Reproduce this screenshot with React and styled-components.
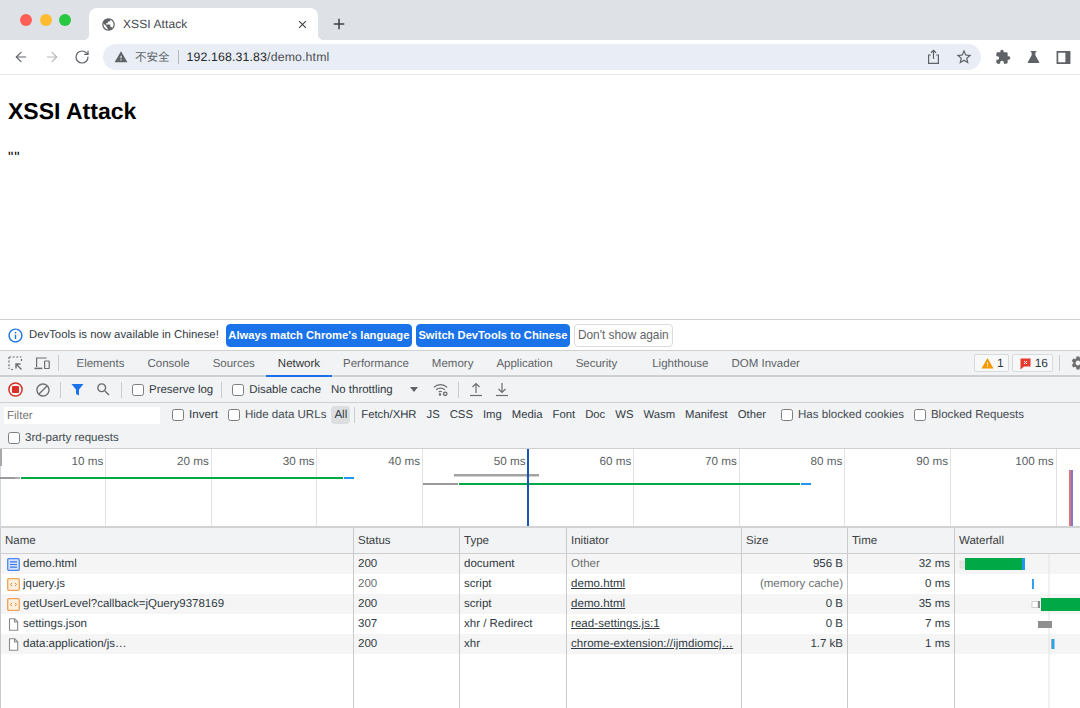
import React from "react";
import styled, { createGlobalStyle } from "styled-components";
import {
  MdPublic,
  MdClose,
  MdAdd,
  MdWarning,
  MdExtension,
  MdStarBorder,
  MdInfoOutline,
  MdSettings,
  MdBlock,
  MdSearch,
} from "react-icons/md";
import { ArrowLeft, ArrowRight, RotateCw } from "lucide-react";

const UI_FONT = `"Liberation Sans", Arial, sans-serif`;

const GlobalStyle = createGlobalStyle`
  html, body {
    margin: 0;
    padding: 0;
    background: #fff;
  }
  body {
    font-family: ${UI_FONT};
    text-rendering: geometricPrecision;
    overflow: hidden;
  }
  * {
    box-sizing: border-box;
  }
`;

const Window = styled.div`
  width: 1080px;
  height: 708px;
  display: flex;
  flex-direction: column;
  overflow: hidden;
  background: #fff;
`;

/* browser chrome */
const TabStrip = styled.div`
  height: 40px;
  flex: none;
  display: flex;
  align-items: flex-end;
  background: #dee1e6;
`;

const TrafficLights = styled.div`
  width: 89px;
  align-self: flex-start;
  display: flex;
  gap: 7.5px;
  padding: 14px 0 0 20px;
`;

const Light = styled.span`
  width: 12px;
  height: 12px;
  border-radius: 50%;
  background: ${({ $color }) => $color};
`;

const BrowserTab = styled.div`
  position: relative;
  width: 229px;
  height: 32px;
  display: flex;
  align-items: center;
  padding: 0 9px 0 12px;
  background: #fff;
  border-radius: 8px 8px 0 0;
  color: #45484d;
  font-size: 12px;
  letter-spacing: 0.1px;
  &::before,
  &::after {
    content: "";
    position: absolute;
    bottom: 0;
    width: 6px;
    height: 6px;
  }
  &::before {
    left: -6px;
    background: radial-gradient(circle at 0 0, transparent 6px, #fff 6.5px);
  }
  &::after {
    right: -6px;
    background: radial-gradient(circle at 100% 0, transparent 6px, #fff 6.5px);
  }
`;

const TabTitle = styled.span`
  flex: 1;
  margin-left: 7px;
`;

const NewTab = styled.div`
  margin: 0 0 7px 12px;
  display: flex;
  color: #3c4043;
`;

const Toolbar = styled.div`
  height: 35px;
  flex: none;
  display: flex;
  align-items: flex-start;
  padding-top: 4px;
  background: #fff;
  border-bottom: 1px solid #e6e6e6;
`;

const NavIcons = styled.div`
  width: 103px;
  height: 26px;
  display: flex;
  align-items: center;
  gap: 14.5px;
  padding-left: 13px;
`;

const NavIcon = styled.span`
  display: flex;
  color: ${({ $muted }) => ($muted ? "#b4b7ba" : "#5f6368")};
`;

const Omnibox = styled.div`
  width: 878px;
  height: 26px;
  display: flex;
  align-items: center;
  padding: 0 8px 0 11px;
  background: #e9eef6;
  border-radius: 13px;
`;

const NotSecure = styled.span`
  margin-left: 7px;
  padding-right: 8px;
  border-right: 1px solid #b5b8bd;
  color: #5f6368;
  font-family: "Noto Sans CJK SC", ${UI_FONT};
  font-size: 11.5px;
  line-height: 14px;
`;

const Url = styled.span`
  flex: 1;
  margin-left: 8px;
  color: #26282b;
  font-size: 12.3px;
  letter-spacing: 0.15px;
  & > em {
    font-style: normal;
    color: #4a4d51;
  }
`;

const OmniActions = styled.div`
  display: flex;
  align-items: center;
  gap: 14px;
  color: #5f6368;
`;

const ExtensionIcons = styled.div`
  height: 26px;
  display: flex;
  align-items: center;
  gap: 15px;
  padding-left: 14px;
  color: #5f6368;
`;

/* inspected page */
const Page = styled.div`
  height: 244px;
  flex: none;
  padding: 22px 8px 0;
  color: #000;
`;

const Heading = styled.h1`
  margin: 0;
  font-size: 23px;
  line-height: 28px;
  font-weight: 700;
`;

const Output = styled.p`
  margin: 25px 0 0;
  font-size: 15px;
  line-height: 16px;
  letter-spacing: 1px;
`;

/* devtools */
const InfoBar = styled.div`
  height: 32px;
  flex: none;
  display: flex;
  align-items: center;
  padding-left: 7px;
  background: #fff;
  border-top: 1px solid #d0d0d0;
  border-bottom: 1px solid #d0d0d0;
  color: #303942;
  font-size: 11.35px;
`;

const InfoText = styled.span`
  margin: 0 7px 0 5px;
`;

const InfoButton = styled.button`
  height: 23px;
  margin-right: 4px;
  padding: 0 ${({ $plain }) => ($plain ? 3 : 1.5)}px;
  border-radius: 4px;
  font-family: ${UI_FONT};
  font-size: ${({ $plain }) => ($plain ? 11.9 : 11.2)}px;
  font-weight: ${({ $plain }) => ($plain ? 400 : 700)};
  color: ${({ $plain }) => ($plain ? "#5f6368" : "#fff")};
  background: ${({ $plain }) => ($plain ? "#fff" : "#1a73e8")};
  border: 1px solid ${({ $plain }) => ($plain ? "#dadce0" : "#1a73e8")};
  white-space: nowrap;
`;

const PanelTabs = styled.div`
  height: 26px;
  flex: none;
  display: flex;
  align-items: stretch;
  background: #f1f3f4;
  border-bottom: 2px solid #cdcfd1;
  color: #5f6368;
  font-size: 11.5px;
`;

const IconCell = styled.span`
  display: flex;
  align-items: center;
  margin: ${({ $margin }) => $margin || "0"};
  color: ${({ $color }) => $color || "#6e6e6e"};
`;

const Divider = styled.span`
  flex: none;
  align-self: center;
  width: 1px;
  height: 16px;
  margin: ${({ $margin }) => $margin || "0"};
  background: #ccc;
`;

const PanelTab = styled.span`
  display: flex;
  align-items: center;
  padding: 1px 11.5px 0;
  margin: ${({ $margin }) => $margin || "0"};
  color: ${({ $active }) => ($active ? "#333" : "#5f6368")};
  box-shadow: ${({ $active }) => ($active ? "0 2px 0 #1a73e8" : "none")};
`;

const Badges = styled.div`
  margin-left: auto;
  display: flex;
  align-items: center;
  gap: 3px;
`;

const Badge = styled.span`
  height: 18px;
  display: flex;
  align-items: center;
  gap: 3px;
  padding: 0 4px 0 6px;
  background: #f7f8f8;
  border: 1px solid #d8dadc;
  border-radius: 2px;
  color: #303942;
  font-size: 12px;
`;

const NetToolbar = styled.div`
  height: 26px;
  flex: none;
  display: flex;
  align-items: center;
  background: #f1f3f4;
  border-bottom: 1px solid #cdcfd1;
  color: #303942;
  font-size: 11.45px;
`;

const Check = styled.input.attrs({ type: "checkbox", readOnly: true })`
  appearance: none;
  flex: none;
  width: 12px;
  height: 12px;
  margin: 0 5px 0 0;
  background: #fff;
  border: 1px solid #7d7d7d;
  border-radius: 2.5px;
`;

const CheckLabel = styled.label`
  display: flex;
  align-items: center;
  margin: ${({ $margin }) => $margin || "0"};
  color: ${({ $dim }) => ($dim ? "#444a50" : "#303942")};
  white-space: nowrap;
`;

const Throttle = styled.span`
  margin-left: 10px;
  width: 87px;
  display: flex;
  align-items: center;
  justify-content: space-between;
  &::after {
    content: "";
    border-left: 4px solid transparent;
    border-right: 4px solid transparent;
    border-top: 5px solid #5f6368;
  }
`;

const FilterPanel = styled.div`
  height: 46px;
  flex: none;
  padding: 2px 0 0 4px;
  background: #f1f3f4;
  border-bottom: 1px solid #cdcfd1;
  color: #303942;
  font-size: 11.55px;
`;

const FilterRow = styled.div`
  height: 20px;
  display: flex;
  align-items: center;
`;

const FilterInput = styled.span`
  flex: none;
  width: 156px;
  height: 17px;
  margin-top: 1px;
  display: flex;
  align-items: center;
  padding-left: 3px;
  background: #fff;
  color: #777;
`;

const Chip = styled.span`
  flex: none;
  font-size: 11.3px;
  margin-right: ${({ $gap }) => ($gap === undefined ? 10 : $gap)}px;
`;

const ChipAll = styled.span`
  flex: none;
  height: 18px;
  margin-left: 5px;
  padding: 0 3px;
  display: flex;
  align-items: center;
  background: #dcdee0;
  border-radius: 4px;
`;

const SecondRow = styled(FilterRow)`
  margin-top: 3px;
  padding-left: 4px;
`;

const Overview = styled.div`
  position: relative;
  height: 79px;
  flex: none;
  display: grid;
  grid-template-columns: repeat(10, 105.6px) 1fr;
  padding-left: 0.7px;
  background: #fff;
  border-bottom: 2px solid #d0d2d4;
  box-shadow: inset 1px 0 #d0d8e4;
`;

const Tick = styled.div`
  padding: 6px 2px 0 0;
  text-align: right;
  color: #5b5f63;
  font-size: 11.7px;
  line-height: 14px;
  border-right: 1px solid ${({ $hidden }) => ($hidden ? "transparent" : "#e2e2e2")};
`;

const OverviewMarks = styled.svg`
  position: absolute;
  left: 0;
  top: 0;
  width: 1080px;
  height: 77px;
`;

const TableWrap = styled.div`
  flex: 1;
  min-height: 0;
  overflow: hidden;
`;

const Table = styled.table`
  width: 1080px;
  height: 100%;
  table-layout: fixed;
  border-collapse: separate;
  border-spacing: 0;
  color: #303942;
  font-size: 11.5px;
`;

const Th = styled.th`
  height: 26px;
  padding: 0 4px;
  text-align: left;
  font-weight: 400;
  color: #3c4043;
  background: #f1f3f4;
  border-bottom: 1px solid #cdcfd1;
  border-right: 1px solid #c8cacc;
  &:first-child {
    border-left: 1px solid #c8cacc;
  }
  &:last-child {
    border-right: none;
  }
`;

const Tr = styled.tr`
  background: ${({ $striped }) => ($striped ? "#f5f5f5" : "#fff")};
`;

const Td = styled.td`
  height: 20px;
  padding: 0 4px;
  white-space: nowrap;
  overflow: hidden;
  text-overflow: ellipsis;
  text-align: ${({ $right }) => ($right ? "right" : "left")};
  color: ${({ $dim }) => ($dim ? "#6c6f73" : "#303942")};
  border-right: 1px solid #c8cacc;
  &:first-child {
    border-left: 1px solid #c8cacc;
  }
  &:last-child {
    border-right: none;
    padding: 0;
  }
`;

const NameCell = styled.span`
  display: flex;
  align-items: center;
  gap: 3px;
  padding-left: 2px;
`;

const InitiatorLink = styled.span`
  text-decoration: underline;
  color: #303942;
  letter-spacing: 0.06px;
`;

const FillerCell = styled.td`
  padding: 0;
  border-right: 1px solid #c8cacc;
  &:first-child {
    border-left: 1px solid #c8cacc;
  }
  &:last-child {
    border-right: none;
  }
`;

const WaterfallSvg = styled.svg`
  display: block;
  width: 125px;
  height: ${({ $h }) => $h || 20}px;
`;

const FlaskIcon = () => (
  <svg width="15" height="16" viewBox="0 0 16 16" fill="currentColor">
    <path d="M5 1.5h6v1.3H10v3.4l4 7c.4.8-.1 1.3-.9 1.3H2.900c-.8 0-1.300-.5-.9-1.300l4-7V2.800H5z" />
  </svg>
);

const SidePanelIcon = () => (
  <svg width="15" height="15" viewBox="0 0 16 16">
    <path d="M1.500 2h13v12h-13z" fill="none" stroke="currentColor" strokeWidth="1.800" />
    <path d="M10 2h4.500v12H10z" fill="currentColor" />
  </svg>
);

const ShareIcon = () => (
  <svg width="15" height="16" viewBox="0 0 15 16" fill="none" stroke="currentColor" strokeWidth="1.200">
    <path d="M4.800 6H2.600v8.400h9.800V6h-2.200" />
    <path d="M7.500 10V1.600M5 3.800l2.500-2.400L10 3.800" />
  </svg>
);

const InspectIcon = () => (
  <svg width="15" height="15" viewBox="0 0 15 15" fill="none" stroke="#6e6e6e" strokeWidth="1.200">
    <path d="M1 1h12.500M1 1v12" strokeDasharray="2 1.600" />
    <path d="M13.500 3v3M3 13.500h3" strokeDasharray="2 1.600" />
    <path d="M13.500 13.500 8 8M8 12.500V8h4.500" strokeWidth="1.400" />
  </svg>
);

const DeviceIcon = () => (
  <svg width="16" height="15" viewBox="0 0 16 15" fill="none" stroke="#6e6e6e" strokeWidth="1.200">
    <path d="M2.600 11V2h10" />
    <path d="M.4 12.400h8" strokeWidth="1.500" />
    <rect x="10.600" y="5" width="4.600" height="7.500" rx=".6" />
  </svg>
);

const RecordIcon = () => (
  <svg width="15" height="15" viewBox="0 0 15 15">
    <circle cx="7.500" cy="7.500" r="6.600" fill="none" stroke="#d93025" strokeWidth="1.500" />
    <rect x="4" y="4" width="7" height="7" rx="1" fill="#d93025" />
  </svg>
);

const FunnelIcon = () => (
  <svg width="13" height="13" viewBox="0 0 13 13">
    <path d="M.5 1h12L8 6.500V12.500L5 11V6.500z" fill="#1a73e8" />
  </svg>
);

const WifiGearIcon = () => (
  <svg width="16" height="14" viewBox="0 0 16 14" fill="none" stroke="#6e6e6e" strokeWidth="1.200">
    <path d="M.8 4.400C4.500.8 10.500.8 14.200 4.400M3.200 6.800c2.400-2.200 6.200-2.200 8.600 0M5.600 9c1-.8 2.400-.8 3.200-.3" />
    <circle cx="7" cy="11.500" r=".7" fill="#6e6e6e" />
    <circle cx="12.200" cy="10.800" r="1.700" strokeWidth="1.400" />
  </svg>
);

const TransferIcon = ({ down }) => (
  <svg width="14" height="15" viewBox="0 0 14 15" fill="none" stroke="#6e6e6e" strokeWidth="1.200">
    <path d="M1 13.500h12" />
    {down ? <path d="M7 1v9.500M3.500 7 7 10.500 10.500 7" /> : <path d="M7 11V1.500M3.500 5 7 1.500 10.500 5" />}
  </svg>
);

const IssueFlagIcon = () => (
  <svg width="13" height="13" viewBox="0 0 13 13">
    <path d="M1.500 1.500h10v8H5L1.500 12.500z" fill="#e8392e" />
    <path d="M5 4l3 3M8 4 5 7" stroke="#fff" strokeWidth="1" />
  </svg>
);

const FileDoc = () => (
  <svg width="13" height="13" viewBox="0 0 13 13">
    <rect x=".7" y=".7" width="11.600" height="11.600" rx="1.200" fill="#d5e3fb" stroke="#4d86ee" strokeWidth="1.300" />
    <path d="M3 3.800h7M3 6.500h7M3 9.200h7" stroke="#3a76e6" strokeWidth="1.200" />
  </svg>
);

const FileScript = () => (
  <svg width="13" height="13" viewBox="0 0 13 13" fill="none">
    <rect x=".7" y=".7" width="11.600" height="11.600" rx="1.200" fill="#fdf0e0" stroke="#eda254" strokeWidth="1.300" />
    <path d="M5 4.900 3.500 6.500 5 8.100M8 4.900l1.500 1.600L8 8.100" stroke="#de8a35" strokeWidth="1" />
  </svg>
);

const FilePlain = () => (
  <svg width="13" height="13" viewBox="0 0 13 13" fill="#fff" stroke="#8a8a8a" strokeWidth="1.100">
    <path d="M2.500.8h5.200l3 3v8.400h-8.200z" />
    <path d="M7.500.8v3.200h3.200" fill="none" />
  </svg>
);

const GRID_X = 94;

// the x positions are page pixels minus the column start (955)
const Bars = ({ children, h }) => (
  <WaterfallSvg $h={h} viewBox={`0 0 125 ${h || 20}`} preserveAspectRatio="none">
    <line x1={GRID_X} x2={GRID_X} y1="0" y2={h || 20} stroke="#e3e3e3" />
    {children}
  </WaterfallSvg>
);

const ticks = ["10 ms", "20 ms", "30 ms", "40 ms", "50 ms", "60 ms", "70 ms", "80 ms", "90 ms", "100 ms", ""];

const rows = [
  {
    name: "demo.html",
    icon: <FileDoc />,
    status: "200",
    type: "document",
    initiator: "Other",
    size: "956 B",
    time: "32 ms",
    bars: (
      <>
        <rect x="5" y="7" width="5" height="7" fill="#e6e6e6" stroke="#d0d0d0" strokeWidth=".5" />
        <rect x="10" y="4" width="57" height="12" fill="#00a846" />
        <rect x="67" y="4" width="3" height="12" fill="#2196f3" />
      </>
    ),
  },
  {
    name: "jquery.js",
    icon: <FileScript />,
    status: "200",
    statusDim: true,
    type: "script",
    initiator: "demo.html",
    link: true,
    size: "(memory cache)",
    sizeDim: true,
    time: "0 ms",
    bars: <rect x="77" y="5" width="2" height="10" fill="#2aa3f0" />,
  },
  {
    name: "getUserLevel?callback=jQuery9378169",
    icon: <FileScript />,
    status: "200",
    type: "script",
    initiator: "demo.html",
    link: true,
    size: "0 B",
    time: "35 ms",
    bars: (
      <>
        <rect x="77" y="7.500" width="6" height="6" fill="#fff" stroke="#cfcfcf" />
        <rect x="83" y="7" width="2" height="7" fill="#8a8a8a" />
        <rect x="86" y="4" width="39" height="13" fill="#00a846" />
      </>
    ),
  },
  {
    name: "settings.json",
    icon: <FilePlain />,
    status: "307",
    type: "xhr / Redirect",
    initiator: "read-settings.js:1",
    link: true,
    size: "0 B",
    time: "7 ms",
    bars: <rect x="83" y="7" width="14" height="7" fill="#8f8f8f" />,
  },
  {
    name: "data:application/js…",
    icon: <FilePlain />,
    status: "200",
    type: "xhr",
    initiator: "chrome-extension://ijmdiomcj…",
    link: true,
    size: "1.7 kB",
    time: "1 ms",
    bars: (
      <>
        <rect x="96.300" y="5" width="1" height="10" fill="#8a8a8a" />
        <rect x="97" y="5" width="2.500" height="10" fill="#2aa3f0" />
      </>
    ),
  },
];

function App() {
  return (
    <Window>
      <GlobalStyle />

      <TabStrip>
        <TrafficLights>
          <Light $color="#ff5f57" />
          <Light $color="#febc2e" />
          <Light $color="#28c840" />
        </TrafficLights>
        <BrowserTab>
          <MdPublic size={15} color="#5f6368" />
          <TabTitle>XSSI Attack</TabTitle>
          <MdClose size={13} color="#3c4043" />
        </BrowserTab>
        <NewTab>
          <MdAdd size={18} />
        </NewTab>
      </TabStrip>

      <Toolbar>
        <NavIcons>
          <NavIcon>
            <ArrowLeft size={16} strokeWidth={1.7} />
          </NavIcon>
          <NavIcon $muted>
            <ArrowRight size={16} strokeWidth={1.7} />
          </NavIcon>
          <NavIcon>
            <RotateCw size={16} strokeWidth={1.8} />
          </NavIcon>
        </NavIcons>
        <Omnibox>
          <MdWarning size={14} color="#5f6368" />
          <NotSecure>不安全</NotSecure>
          <Url>
            192.168.31.83<em>/demo.html</em>
          </Url>
          <OmniActions>
            <ShareIcon />
            <MdStarBorder size={18} />
          </OmniActions>
        </Omnibox>
        <ExtensionIcons>
          <MdExtension size={16} />
          <FlaskIcon />
          <SidePanelIcon />
        </ExtensionIcons>
      </Toolbar>

      <Page>
        <Heading>XSSI Attack</Heading>
        <Output>""</Output>
      </Page>

      <InfoBar>
        <MdInfoOutline size={17} color="#1a73e8" />
        <InfoText>DevTools is now available in Chinese!</InfoText>
        <InfoButton>Always match Chrome's language</InfoButton>
        <InfoButton>Switch DevTools to Chinese</InfoButton>
        <InfoButton $plain>Don't show again</InfoButton>
      </InfoBar>

      <PanelTabs>
        <IconCell $margin="0 11px 0 8px">
          <InspectIcon />
        </IconCell>
        <IconCell>
          <DeviceIcon />
        </IconCell>
        <Divider $margin="0 6px 0 8px" />
        <PanelTab>Elements</PanelTab>
        <PanelTab>Console</PanelTab>
        <PanelTab>Sources</PanelTab>
        <PanelTab $active>Network</PanelTab>
        <PanelTab>Performance</PanelTab>
        <PanelTab>Memory</PanelTab>
        <PanelTab>Application</PanelTab>
        <PanelTab>Security</PanelTab>
        <PanelTab $margin="0 0 0 12px">Lighthouse</PanelTab>
        <PanelTab>DOM Invader</PanelTab>
        <Badges>
          <Badge>
            <MdWarning size={13} color="#f29900" />1
          </Badge>
          <Badge>
            <IssueFlagIcon />
            16
          </Badge>
          <Divider $margin="0 7px 0 3px" />
          <IconCell $margin="0 -6px 0 0">
            <MdSettings size={16} />
          </IconCell>
        </Badges>
      </PanelTabs>

      <NetToolbar>
        <IconCell $margin="0 12px 0 8px">
          <RecordIcon />
        </IconCell>
        <IconCell>
          <MdBlock size={16} />
        </IconCell>
        <Divider $margin="0 10px 0 9px" />
        <IconCell>
          <FunnelIcon />
        </IconCell>
        <IconCell $margin="0 0 0 11px">
          <MdSearch size={17} />
        </IconCell>
        <Divider $margin="0 10px 0 9px" />
        <CheckLabel>
          <Check />
          Preserve log
        </CheckLabel>
        <Divider $margin="0 10px 0 8px" />
        <CheckLabel>
          <Check />
          Disable cache
        </CheckLabel>
        <Throttle>No throttling</Throttle>
        <IconCell $margin="0 0 0 15px">
          <WifiGearIcon />
        </IconCell>
        <Divider $margin="0 10px 0 9px" />
        <IconCell>
          <TransferIcon />
        </IconCell>
        <IconCell $margin="0 0 0 12px">
          <TransferIcon down />
        </IconCell>
      </NetToolbar>

      <FilterPanel>
        <FilterRow>
          <FilterInput>Filter</FilterInput>
          <CheckLabel $margin="0 0 0 12px">
            <Check />
            Invert
          </CheckLabel>
          <CheckLabel $margin="0 0 0 10px" $dim>
            <Check />
            Hide data URLs
          </CheckLabel>
          <ChipAll>All</ChipAll>
          <Divider $margin="0 6px 0 4px" />
          <Chip>Fetch/XHR</Chip>
          <Chip>JS</Chip>
          <Chip>CSS</Chip>
          <Chip>Img</Chip>
          <Chip>Media</Chip>
          <Chip>Font</Chip>
          <Chip>Doc</Chip>
          <Chip>WS</Chip>
          <Chip>Wasm</Chip>
          <Chip>Manifest</Chip>
          <Chip $gap={15}>Other</Chip>
          <CheckLabel $dim>
            <Check />
            Has blocked cookies
          </CheckLabel>
          <CheckLabel $margin="0 0 0 10px" $dim>
            <Check />
            Blocked Requests
          </CheckLabel>
        </FilterRow>
        <SecondRow>
          <CheckLabel $dim>
            <Check />
            3rd-party requests
          </CheckLabel>
        </SecondRow>
      </FilterPanel>

      <Overview>
        {ticks.map((t, i) => (
          <Tick key={i} $hidden={i === 10 || i === 4}>
            {t}
          </Tick>
        ))}
        <OverviewMarks viewBox="0 0 1080 77">
          <rect x="0" y="0" width="2" height="17" fill="#a9a9a9" />
          <rect x="0" y="28" width="15" height="2" fill="#9a9a9a" />
          <rect x="15" y="28" width="5" height="2" fill="#b0b0b0" />
          <rect x="21" y="28" width="322" height="2" fill="#00a846" />
          <rect x="344" y="28" width="10" height="2" fill="#2196f3" />
          <rect x="423" y="34" width="22" height="2" fill="#9a9a9a" />
          <rect x="445" y="34" width="13" height="2" fill="#9a9a9a" />
          <rect x="459" y="34" width="341" height="2" fill="#00a846" />
          <rect x="801" y="34" width="10" height="2" fill="#2196f3" />
          <rect x="454" y="25" width="85" height="2.500" fill="#a3a3a3" />
          <rect x="527" y="0" width="2" height="77" fill="#1a55b5" />
          <rect x="1069" y="21" width="2" height="56" fill="#e57373" />
          <rect x="1071" y="21" width="2" height="56" fill="#7a7ad6" />
        </OverviewMarks>
      </Overview>

      <TableWrap>
        <Table>
          <colgroup>
            <col width="354" />
            <col width="106" />
            <col width="107" />
            <col width="175" />
            <col width="106" />
            <col width="107" />
            <col width="125" />
          </colgroup>
          <thead>
            <tr>
              <Th>Name</Th>
              <Th>Status</Th>
              <Th>Type</Th>
              <Th>Initiator</Th>
              <Th>Size</Th>
              <Th>Time</Th>
              <Th>Waterfall</Th>
            </tr>
          </thead>
          <tbody>
            {rows.map((r, i) => (
              <Tr key={r.name} $striped={i % 2 === 0}>
                <Td>
                  <NameCell>
                    {r.icon}
                    {r.name}
                  </NameCell>
                </Td>
                <Td $dim={r.statusDim}>{r.status}</Td>
                <Td>{r.type}</Td>
                <Td $dim={!r.link}>{r.link ? <InitiatorLink>{r.initiator}</InitiatorLink> : r.initiator}</Td>
                <Td $right $dim={r.sizeDim}>
                  {r.size}
                </Td>
                <Td $right>{r.time}</Td>
                <Td>
                  <Bars>{r.bars}</Bars>
                </Td>
              </Tr>
            ))}
            <tr>
              <FillerCell />
              <FillerCell />
              <FillerCell />
              <FillerCell />
              <FillerCell />
              <FillerCell />
              <FillerCell>
                <Bars h={56} />
              </FillerCell>
            </tr>
          </tbody>
        </Table>
      </TableWrap>
    </Window>
  );
}

export default App;
